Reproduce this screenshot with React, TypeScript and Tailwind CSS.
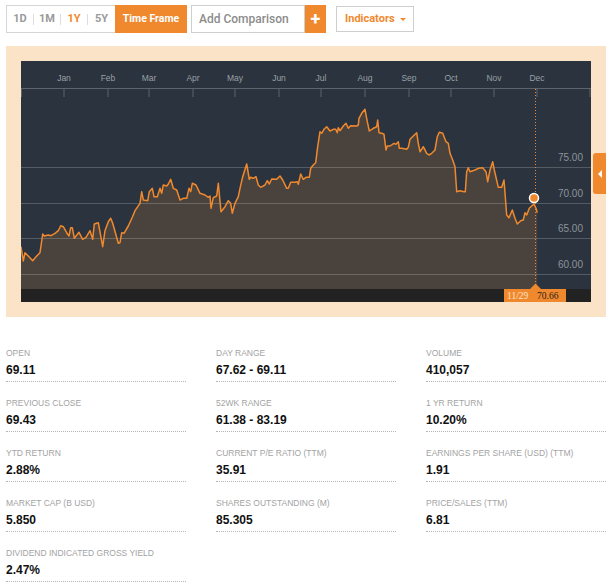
import React from 'react';

const pts: [number, number][] = [
  [21, 246.7], [23.3, 261], [25, 252.7], [28.3, 256], [32.7, 260.7], [36, 256.7], [40, 252.7],
  [42.7, 234], [44.3, 236], [48.3, 235], [51, 235.7], [55, 233.3], [58.3, 230.7], [60.7, 225.7],
  [63.3, 226.7], [66.7, 232.7], [69, 236], [70.7, 227.7], [72.3, 227.7], [74.3, 238.3], [79, 232.3],
  [82.7, 239.3], [86, 237.3], [90, 230.7], [92.7, 239.3], [94.3, 224], [98.3, 222.7], [102.7, 246.7],
  [105, 230.7], [108.3, 221.7], [110.7, 218.3], [112.7, 223.3], [118.3, 243.3], [120, 242.7],
  [121.7, 232.7], [124, 233.3], [128.3, 226], [132.3, 217.3], [135, 210.7], [140, 203.3],
  [141.7, 191.7], [143.3, 200], [147.7, 200.7], [149.3, 191.7], [152.3, 188.3], [154, 196.7],
  [157.3, 196.7], [160, 188.3], [161.7, 193.3], [163.3, 185], [166.7, 186], [168.3, 184],
  [170.7, 179.3], [173.3, 188.3], [176.7, 190], [180, 200], [183.3, 198.3], [186.7, 198.3],
  [189, 188.3], [190.7, 191.7], [192.3, 183.3], [196, 185], [200, 193.3], [205, 195], [208.3, 197.3],
  [210, 196], [211, 208.3], [213.3, 197.7], [216.7, 196], [218.3, 183.3], [221, 211.7], [225, 206.7],
  [228.3, 200.7], [230.7, 203.3], [232.3, 213.3], [235, 203.3], [238.3, 196.7], [240, 188.3],
  [242.7, 176.7], [246.7, 164], [249.3, 179.3], [250.7, 177.3], [253.3, 178.3], [256, 176.7],
  [258.3, 185], [260.7, 187.3], [265, 185], [267.3, 180.7], [269.3, 184], [271.7, 179], [276.7, 179.3],
  [280, 176], [282.7, 180], [286.7, 188.3], [288.3, 188.3], [290.7, 182.3], [295, 182.3], [297.3, 181.7],
  [298.3, 184.3], [300.7, 174], [303.3, 179.3], [306, 177.3], [309.3, 177.3], [310.7, 168.3], [313.3, 165],
  [315.7, 162.7], [317.7, 146.7], [320, 131.7], [321.7, 133.3], [324, 129.3], [326.7, 126.7], [330, 131],
  [333.3, 129.3], [335.7, 129.3], [337.3, 132.7], [338.3, 127.7], [340, 130.7], [343.3, 126], [346, 123.3],
  [348.3, 128.3], [350.7, 125.7], [356.7, 126], [358.3, 125], [359, 118.3], [361.7, 113.3], [365, 109.3],
  [367.3, 121.7], [369.3, 131], [373.3, 128.3], [376.7, 126.7], [377.7, 120], [379, 132.7], [381.7, 133.3],
  [384, 134.3], [386, 150], [387.3, 146], [390, 146], [394, 143.3], [396, 144.3], [398.3, 141.7],
  [399.3, 148.3], [401.7, 148.3], [406.7, 149.3], [408.3, 147.3], [410, 139.3], [413.3, 136],
  [416.7, 132.7], [418.3, 143.3], [420, 151.7], [421.7, 149.3], [423.3, 146.7], [426.7, 153.3], [429, 155],
  [431.7, 153.3], [435, 150], [437.3, 136.7], [439.3, 132.3], [442.7, 133.3], [446, 141.7], [448.3, 143.3],
  [450, 153.3], [452.7, 160], [455, 166.7], [456.7, 191.7], [460, 190.7], [464, 191.7], [465.3, 191.7],
  [466.7, 171.7], [468.3, 167.7], [470, 171.7], [475, 170], [478.3, 168.3], [482.7, 167.7], [486, 171.7],
  [487.7, 181.7], [490, 170], [492.7, 161.7], [494.3, 170], [498.3, 187.3], [501.7, 187.3], [504, 180],
  [506.7, 215], [509, 217.7], [512.3, 210], [515, 218.3], [517.3, 224], [520.7, 220.7], [523.3, 220],
  [525, 212.7], [526.7, 215], [529.3, 208.3], [531.7, 206], [534, 204], [536, 208.3], [537.3, 212.7],
];

const months = [
  ['Jan', 64], ['Feb', 108], ['Mar', 149], ['Apr', 193], ['May', 235], ['Jun', 279],
  ['Jul', 321], ['Aug', 365], ['Sep', 409], ['Oct', 451], ['Nov', 494], ['Dec', 537],
] as const;

const ticks = [21.5, 64, 108, 149, 193, 235, 279, 321, 365, 409, 451, 494, 537, 590];

const grid = [
  { y: 167, label: '75.00' },
  { y: 203, label: '70.00' },
  { y: 238, label: '65.00' },
  { y: 274, label: '60.00' },
];

const stats = [
  ['OPEN', '69.11'], ['DAY RANGE', '67.62 - 69.11'], ['VOLUME', '410,057'],
  ['PREVIOUS CLOSE', '69.43'], ['52WK RANGE', '61.38 - 83.19'], ['1 YR RETURN', '10.20%'],
  ['YTD RETURN', '2.88%'], ['CURRENT P/E RATIO (TTM)', '35.91'], ['EARNINGS PER SHARE (USD) (TTM)', '1.91'],
  ['MARKET CAP (B USD)', '5.850'], ['SHARES OUTSTANDING (M)', '85.305'], ['PRICE/SALES (TTM)', '6.81'],
  ['DIVIDEND INDICATED GROSS YIELD', '2.47%'],
];

function PriceChart() {
  const line = pts.map(([x, y], i) => `${i ? 'L' : 'M'}${x} ${y}`).join(' ');
  const last = pts[pts.length - 1];
  const area = `${line} L${last[0]} 289 L21 289 Z`;

  return (
    <svg width="570" height="241" viewBox="21 61 570 241" className="block">
      <rect x="21" y="61" width="570" height="241" fill="#2b333e" />
      <path d={area} fill="#4a433d" />
      {grid.map((g) => (
        <g key={g.label}>
          <line x1="21" x2="591" y1={g.y + 0.5} y2={g.y + 0.5} stroke="#ffffff" strokeOpacity="0.2" />
          <text x="583" y={g.y - 6} textAnchor="end" fontSize="10" fill="#8d939b" fontFamily="Liberation Sans, Arial, sans-serif">
            {g.label}
          </text>
        </g>
      ))}
      <line x1="21" x2="591" y1="88.5" y2="88.5" stroke="#5d646d" />
      {ticks.map((t) => (
        <line key={t} x1={t} x2={t} y1="88" y2="97" stroke="#5d646d" />
      ))}
      {months.map(([m, x]) => (
        <text key={m} x={x} y="81" textAnchor="middle" fontSize="8.5" fill="#9aa0a7" fontFamily="Liberation Sans, Arial, sans-serif">
          {m}
        </text>
      ))}
      <path d={line} fill="none" stroke="#f0892e" strokeWidth="1.5" strokeLinejoin="round" />
      <line x1="535.5" x2="535.5" y1="89" y2="289" stroke="#f0892e" strokeDasharray="1 2" />
      <rect x="21" y="289" width="570" height="13" fill="#222222" />
      <rect x="504" y="289" width="62" height="13" fill="#f0892e" />
      <path d="M530 289 L535.5 283.5 L541 289 Z" fill="#f0892e" />
      <text x="507" y="299" fontSize="9.5" fill="#fde3c8" fontFamily="Liberation Serif, serif">11/29</text>
      <text x="537" y="299" fontSize="9.5" fill="#2a2118" fontFamily="Liberation Serif, serif">70.66</text>
      <circle cx="534" cy="198" r="4.5" fill="#f0892e" stroke="#ffffff" strokeWidth="1.5" />
    </svg>
  );
}

export default function App() {
  return (
    <div className="w-[608px] min-h-[583px] bg-white pt-[5px] pl-[6px] font-['Roboto',sans-serif]">
      <div className="flex items-start h-[28px]">
        <div className="flex h-[28px] items-center border border-r-0 border-[#d5d5d5] w-[109px] text-[11px] font-bold">
          <span className="w-[26px] text-center text-[#9a9a9a]">1D</span>
          <span className="w-px h-[11px] bg-[#dddddd]" />
          <span className="w-[26px] text-center text-[#9a9a9a]">1M</span>
          <span className="w-px h-[11px] bg-[#dddddd]" />
          <span className="w-[26px] text-center text-[#f0892e]">1Y</span>
          <span className="w-px h-[11px] bg-[#dddddd]" />
          <span className="w-[27px] text-center text-[#9a9a9a]">5Y</span>
        </div>
        <div className="w-[72px] h-[28px] bg-[#f0892e] text-white text-[10.5px] font-bold flex items-center justify-center">
          Time Frame
        </div>
        <div className="ml-[4px] flex h-[28px]">
          <div className="w-[114px] border border-[#cfcfcf] flex items-center pl-[7px] text-[12px] font-medium text-[#8c8c8c]">
            Add Comparison
          </div>
          <div className="w-[21px] bg-[#f0892e] text-white text-[18px] font-bold flex items-center justify-center leading-none">
            +
          </div>
        </div>
        <div className="ml-[10px] mt-[1px] w-[78px] h-[26px] border border-[#cfcfcf] flex items-center pl-[8px] gap-[5px] text-[11px] font-bold text-[#f0892e]">
          Indicators
          <span className="w-0 h-0 border-l-[3px] border-r-[3px] border-t-[3px] border-l-transparent border-r-transparent border-t-[#f0892e]" />
        </div>
      </div>

      <div className="relative mt-[13px] w-[600px] h-[271px] bg-[#fbe3c8] p-[15px]">
        <PriceChart />
        <div className="absolute left-[587px] top-[107px] w-[13px] h-[41px] bg-[#f0892e] rounded-l-[3px] flex items-center justify-center">
          <span className="w-0 h-0 border-t-[4px] border-b-[4px] border-r-[4px] border-t-transparent border-b-transparent border-r-white" />
        </div>
      </div>

      <div className="mt-[30px] w-[600px] grid grid-cols-3 gap-x-[30px] gap-y-[15px] font-['Liberation_Sans',Arial,sans-serif]">
        {stats.map(([label, value]) => (
          <div key={label} className="border-b border-dotted border-[#b5b5b5] pb-[3px]">
            <div className="text-[8.5px] leading-[12px] text-[#a3a3a3]">{label}</div>
            <div className="mt-[4px] text-[12px] leading-[15px] font-bold text-[#111111]">{value}</div>
          </div>
        ))}
      </div>
    </div>
  );
}
